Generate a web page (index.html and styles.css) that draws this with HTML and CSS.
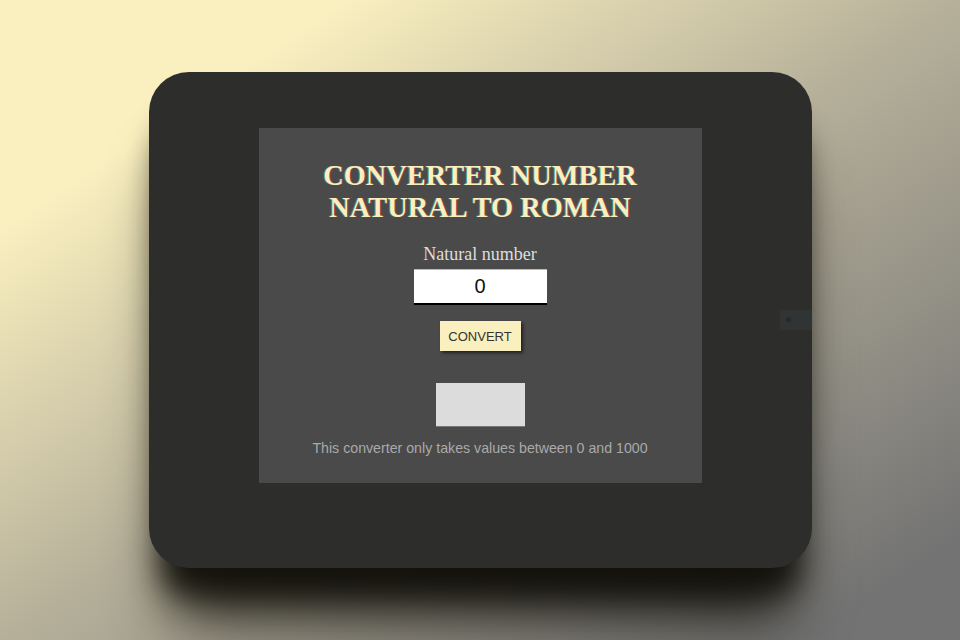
FILE: index.html
```html
<!DOCTYPE html>
<html>
<head>
<meta charset="utf-8">
<link rel="stylesheet" href="styles.css">
</head>
<body>
<div class="card">
  <div class="panel">
    <h1 class="title">CONVERTER NUMBER<br>NATURAL TO ROMAN</h1>
    <label class="label" for="num">Natural number</label>
    <input class="field" id="num" type="text" value="0">
    <button class="btn">CONVERT</button>
    <div class="result"></div>
    <p class="note">This converter only takes values between 0 and 1000</p>
  </div>
  <div class="tab"><span class="dot"></span></div>
</div>
</body>
</html>
```
FILE: styles.css
```css
html, body {
  margin: 0;
  padding: 0;
}
body {
  width: 960px;
  height: 640px;
  overflow: hidden;
  display: flex;
  align-items: center;
  justify-content: center;
  background: linear-gradient(to bottom right, #f9efbf 18%, #b6b09a 50%, #737373 92%);
}
.card {
  position: relative;
  width: 663px;
  height: 496px;
  box-sizing: border-box;
  padding-top: 56px;
  background: #2d2d2b;
  border-radius: 40px;
  overflow: hidden;
  box-shadow: 0 40px 30px -12px rgba(15, 14, 8, 0.9), 0 75px 60px -22px rgba(15, 14, 8, 0.75);
  display: flex;
  flex-direction: column;
  align-items: center;
}
.panel {
  width: 443px;
  height: 355px;
  box-sizing: border-box;
  background: #4a4a4a;
  padding-top: 32px;
  display: flex;
  flex-direction: column;
  align-items: center;
}
.title {
  margin: 0;
  font-family: "Liberation Serif", "Times New Roman", serif;
  font-weight: bold;
  font-size: 28.4px;
  line-height: 32px;
  text-align: center;
  color: #f9efbf;
  text-shadow: -1px 0 rgba(60, 170, 170, 0.6), 1px 0 rgba(190, 60, 60, 0.6);
}
.label {
  margin-top: 20px;
  font-family: "Liberation Serif", "Times New Roman", serif;
  font-size: 18px;
  line-height: 21px;
  color: #dedede;
}
.field {
  margin-top: 4px;
  width: 133px;
  height: 36px;
  box-sizing: border-box;
  border: none;
  border-top: 1px solid #bbb;
  border-bottom: 2px solid #000;
  background: #fff;
  padding: 0;
  font-family: "Liberation Sans", Arial, sans-serif;
  font-size: 20px;
  color: #111;
  text-align: center;
  outline: none;
}
.btn {
  margin-top: 16px;
  width: 81px;
  height: 30px;
  border: none;
  padding: 0;
  background: #f9efbf;
  color: #333;
  font-family: "Liberation Sans", Arial, sans-serif;
  font-size: 13px;
  box-shadow: 2px 2px 3px rgba(0, 0, 0, 0.55);
}
.result {
  margin-top: 32px;
  width: 89px;
  height: 44px;
  box-sizing: border-box;
  background: #dcdcdc;
  border-bottom: 1px solid #777;
}
.note {
  margin: 13px 0 0;
  font-family: "Liberation Sans", Arial, sans-serif;
  font-size: 14.2px;
  line-height: 16px;
  color: #a9a9a9;
}
.tab {
  position: absolute;
  left: 631px;
  top: 238px;
  width: 40px;
  height: 20px;
  background: rgba(70, 90, 100, 0.18);
}
.dot {
  position: absolute;
  left: 6px;
  top: 7px;
  width: 5px;
  height: 5px;
  border-radius: 50%;
  background: rgba(20, 20, 20, 0.35);
}
```
